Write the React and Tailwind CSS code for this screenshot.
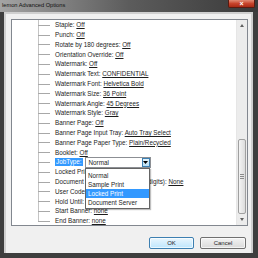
import React from "react";

const rows = [
  { label: "Staple:", value: "Off" },
  { label: "Punch:", value: "Off" },
  { label: "Rotate by 180 degrees:", value: "Off" },
  { label: "Orientation Override:", value: "Off" },
  { label: "Watermark:", value: "Off" },
  { label: "Watermark Text:", value: "CONFIDENTIAL" },
  { label: "Watermark Font:", value: "Helvetica Bold" },
  { label: "Watermark Size:", value: "36 Point" },
  { label: "Watermark Angle:", value: "45 Degrees" },
  { label: "Watermark Style:", value: "Gray" },
  { label: "Banner Page:", value: "Off" },
  { label: "Banner Page Input Tray:", value: "Auto Tray Select" },
  { label: "Banner Page Paper Type:", value: "Plain/Recycled" },
  { label: "Booklet:", value: "Off" },
  { label: "JobType:", value: "Normal", combo: true },
  { label: "Locked Print Password:", value: "None" },
  { label: "Document Server Password (4-8 digits):", value: "None" },
  { label: "User Code:", value: "" },
  { label: "Hold Until:", value: "" },
  { label: "Start Banner:", value: "none" },
  { label: "End Banner:", value: "none" },
];

const options = ["Normal", "Sample Print", "Locked Print", "Document Server"];

const font = { fontFamily: '"Liberation Sans", Arial, sans-serif' };

const TreeRow = ({ label, value, combo, last }) => {
  return (
    <div className="flex h-[9.8px] items-center">
      <div className="w-[26px] shrink-0" />
      {/* tree connector */}
      <div className="relative h-full w-[12px] shrink-0">
        <div
          className={`absolute left-0 top-0 w-px bg-[#c4c4c4] ${last ? "h-1/2" : "h-full"}`}
        />
        <div className="absolute left-0 top-1/2 h-px w-[12px] bg-[#a8a8a8]" />
      </div>
      <div className="w-[5px] shrink-0" />
      {combo ? (
        <div className="flex items-center">
          <span className="bg-[#3399ff] px-px leading-[8px] text-white">{label}</span>
          <div className="ml-[2px] -my-[1px] flex h-[11px] w-[66px] items-center border border-[#8c8f94] bg-white">
            <span className="flex-1 pl-[3px] leading-[9px]">{value}</span>
            <div className="flex h-[9px] w-[8px] items-center justify-center border border-[#3c7fb1] bg-gradient-to-b from-[#e5f4fc] to-[#b9dff4]">
              <svg width="5" height="3" viewBox="0 0 5 3">
                <path d="M0 0h5L2.5 3z" fill="#000" />
              </svg>
            </div>
          </div>
        </div>
      ) : (
        <span className="whitespace-nowrap">
          {label} {value && <span className="underline">{value}</span>}
        </span>
      )}
    </div>
  );
};

export default function App() {
  return (
    <div
      className="flex h-[258px] w-[258px] flex-col overflow-hidden bg-[#3e3e3e] text-[6.3px] text-[#1c1c1c]"
      style={font}
    >
      {/* title bar */}
      <div className="relative h-[12px] shrink-0 bg-gradient-to-r from-[#a4a4a4] via-[#5c5c5c] to-[#3a3a3a]">
        <div className="pl-[2px] pt-[1px] text-[5.7px] leading-[9px] text-[#111]">
          lemon Advanced Options
        </div>
        <div className="absolute right-[3px] top-0 flex h-[8px] w-[27px] items-center justify-center rounded-b-[2px] border border-t-0 border-[#5a1a10] bg-gradient-to-b from-[#e08a74] via-[#c8442c] to-[#a92a14]">
          <span className="text-[7px] font-bold leading-none text-white">×</span>
        </div>
      </div>

      {/* dialog body */}
      <div className="ml-[4px] mr-[5px] mb-[5px] flex flex-1 flex-col border-x-2 border-t-2 border-[#cfcfcf] bg-[#f0f0f0]">
        <div className="ml-[5px] mr-[3px] mt-[5px] flex h-[207px] border border-[#82878f] bg-white">
          <div className="relative flex-1 overflow-hidden">
            {rows.map((r, i) => (
              <TreeRow key={r.label} {...r} last={i === rows.length - 1} />
            ))}
            {/* open dropdown list */}
            <div className="absolute left-[73px] top-[148px] w-[65px] border border-[#646464] bg-white pt-[1.5px] pb-[1px] shadow-[1px_1px_1px_rgba(0,0,0,0.25)]">
              {options.map((o) => (
                <div
                  key={o}
                  className={`h-[9px] whitespace-nowrap pl-[2px] leading-[9px] ${
                    o === "Locked Print" ? "bg-[#3399ff] text-white" : ""
                  }`}
                >
                  {o}
                </div>
              ))}
            </div>
          </div>
          {/* scrollbar */}
          <div className="flex w-[11px] flex-col border-l border-[#e6e6e6] bg-[#ececec]">
            <div className="flex h-[11px] items-center justify-center">
              <svg width="4" height="3" viewBox="0 0 4 3">
                <path d="M0 3h4L2 0z" fill="#606060" />
              </svg>
            </div>
            <div className="flex flex-1 flex-col justify-end px-px">
              <div className="flex h-[75px] items-center justify-center rounded-[2px] border border-[#a0a0a0] bg-gradient-to-r from-[#f4f4f4] to-[#dcdcdc]">
                <div className="flex flex-col gap-px">
                  <div className="h-px w-[4px] bg-[#8a8a8a]" />
                  <div className="h-px w-[4px] bg-[#8a8a8a]" />
                  <div className="h-px w-[4px] bg-[#8a8a8a]" />
                </div>
              </div>
            </div>
            <div className="flex h-[11px] items-center justify-center">
              <svg width="4" height="3" viewBox="0 0 4 3">
                <path d="M0 0h4L2 3z" fill="#606060" />
              </svg>
            </div>
          </div>
        </div>

        {/* buttons */}
        <div className="mr-[5px] mt-[11px] flex justify-end gap-[6px]">
          <button className="h-[12px] w-[45px] rounded-[2px] border border-[#3c7fb1] bg-gradient-to-b from-[#eaf6fd] to-[#bee6fd] text-[6px] leading-[10px] text-[#1c1c1c] shadow-[inset_0_0_0_1px_#ffffffaa]">
            OK
          </button>
          <button className="h-[12px] w-[46px] rounded-[2px] border border-[#707070] bg-gradient-to-b from-[#f3f3f3] to-[#dadada] text-[6px] leading-[10px] text-[#1c1c1c] shadow-[inset_0_0_0_1px_#ffffffaa]">
            Cancel
          </button>
        </div>
      </div>
    </div>
  );
}
